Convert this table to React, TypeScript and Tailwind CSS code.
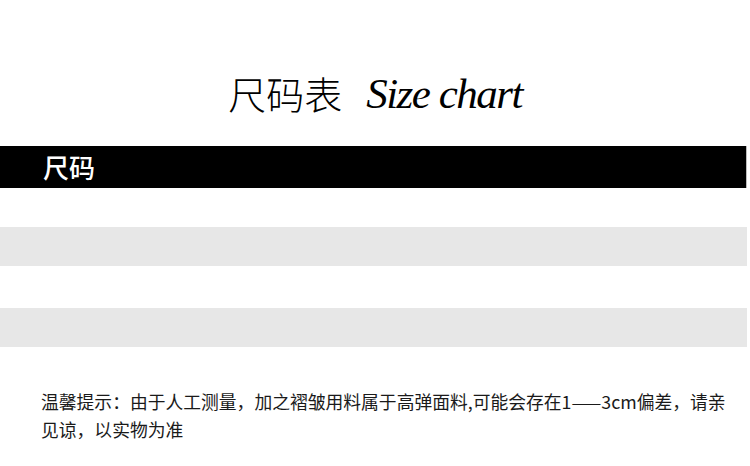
export default function App() {
  const rows = [
    { h: "h-[39px]", bg: "bg-white" },
    { h: "h-[39px]", bg: "bg-[#e7e7e7]" },
    { h: "h-[42px]", bg: "bg-white" },
    { h: "h-[39px]", bg: "bg-[#e7e7e7]" },
  ];

  return (
    <div className="h-[466px] w-[750px] overflow-hidden bg-white">
      {/* Title */}
      <div className="flex h-[146px] items-center justify-center gap-[24px] pt-[40px]">
        <h1 className="font-['Noto_Sans_CJK_SC',sans-serif] text-[38px] font-light leading-none text-black">
          尺码表
        </h1>
        <span className="font-['Liberation_Serif',serif] text-[43px] italic leading-none tracking-[-0.035em] text-black">
          Size chart
        </span>
      </div>

      {/* Table */}
      <div className="w-[747px]">
        <div className="flex h-[42px] items-center border-r border-[#bbbbbb] bg-black pl-[43px]">
          <span className="font-['Noto_Sans_CJK_SC',sans-serif] text-[26px] font-medium leading-none text-white">
            尺码
          </span>
        </div>
        {rows.map((r, i) => (
          <div key={i} className={`${r.h} ${r.bg}`} />
        ))}
      </div>

      {/* Note */}
      <p className="mt-[40px] w-[735px] pl-[41px] font-['Noto_Sans_CJK_SC',sans-serif] text-[17.8px] leading-[28px] text-[#1a1a1a]">
        温馨提示：由于人工测量，加之褶皱用料属于高弹面料,可能会存在1——3cm偏差，请亲见谅，以实物为准
      </p>
    </div>
  );
}
